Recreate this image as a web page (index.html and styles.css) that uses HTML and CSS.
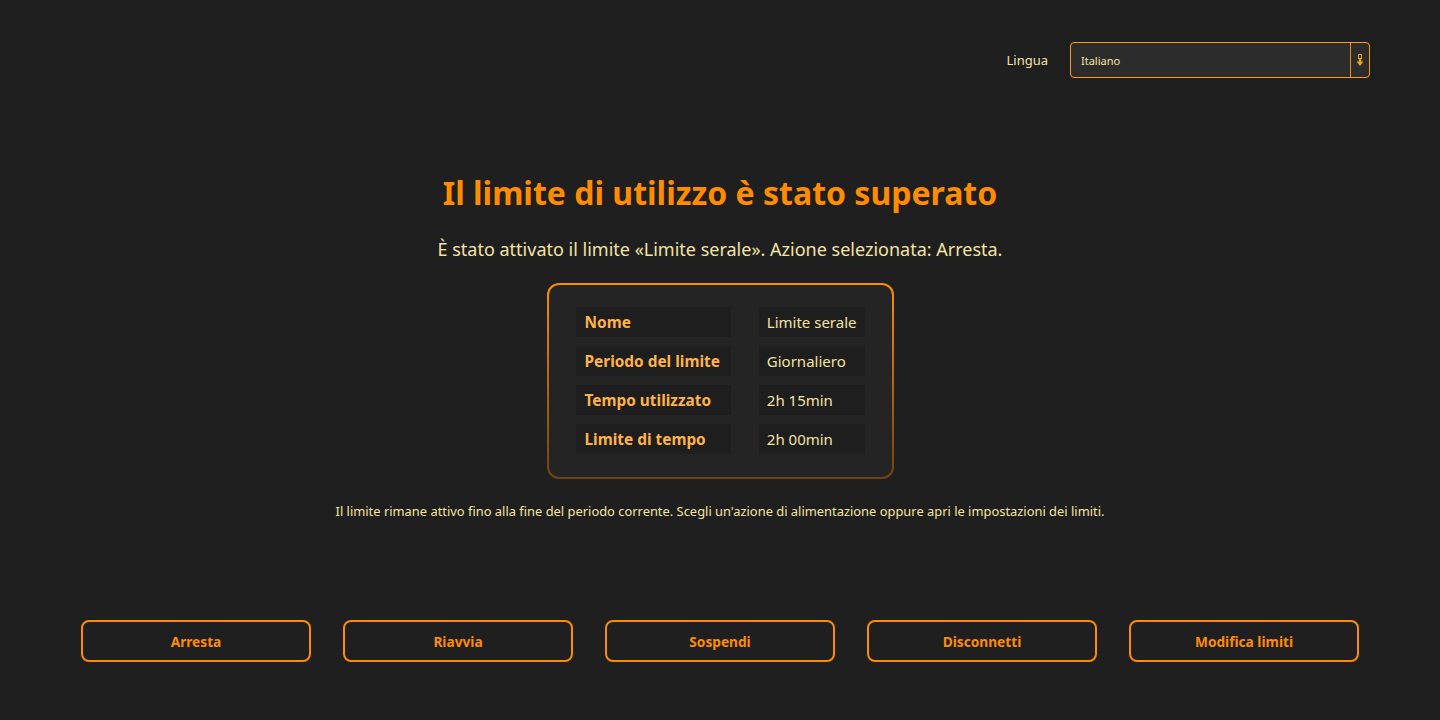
FILE: index.html
```html
<!DOCTYPE html>
<html lang="it">
<head>
  <meta charset="UTF-8">
  <meta name="viewport" content="width=device-width, initial-scale=1.0">
  <title>Limite di utilizzo superato</title>
  <link rel="stylesheet" href="styles.css">
</head>
<body>
  <div class="page">
    <div class="topbar">
      <label class="lang-label" for="lang">Lingua</label>
      <div class="select">
        <span class="select-value">Italiano</span>
        <span class="select-arrow">
          <svg width="8" height="13" viewBox="0 0 8 13">
            <rect x="2.5" y="0.5" width="3" height="4" fill="none" stroke="#e8a800" stroke-width="1"/>
            <rect x="3" y="4.5" width="2" height="4" fill="#e8a800"/>
            <path d="M0.5 7.5 L7.5 7.5 L4 12 Z" fill="#e8a800"/>
          </svg>
        </span>
      </div>
    </div>

    <div class="main">
      <h1>Il limite di utilizzo è stato superato</h1>
      <p class="subtitle">È stato attivato il limite «Limite serale». Azione selezionata: Arresta.</p>

      <div class="card">
        <table class="details">
          <tr><th>Nome</th><td>Limite serale</td></tr>
          <tr><th>Periodo del limite</th><td>Giornaliero</td></tr>
          <tr><th>Tempo utilizzato</th><td>2h 15min</td></tr>
          <tr><th>Limite di tempo</th><td>2h 00min</td></tr>
        </table>
      </div>

      <p class="note">Il limite rimane attivo fino alla fine del periodo corrente. Scegli un'azione di alimentazione oppure apri le impostazioni dei limiti.</p>
    </div>

    <div class="actions">
      <button class="action">Arresta</button>
      <button class="action">Riavvia</button>
      <button class="action">Sospendi</button>
      <button class="action">Disconnetti</button>
      <button class="action">Modifica limiti</button>
    </div>
  </div>
</body>
</html>
```

FILE: styles.css
```css
body {
  margin: 0;
  padding: 0;
  background-color: #1f1f1f;
  font-family: "Noto Sans", "Open Sans", sans-serif;
  color: #f3e4a2;
  height: 100vh;
  overflow: hidden;
}

.page {
  display: flex;
  flex-direction: column;
  height: 720px;
  box-sizing: border-box;
  padding: 42px 81px 0 81px;
}

.topbar {
  display: flex;
  justify-content: flex-end;
  align-items: center;
  gap: 22px;
  margin-right: -11px;
}

.lang-label {
  font-size: 13px;
}

.select {
  width: 300px;
  height: 36px;
  box-sizing: border-box;
  border: 1px solid #ff9a1a;
  border-radius: 4px;
  background: #2c2c2c;
  display: flex;
  align-items: center;
}

.select-value {
  flex: 1;
  padding-left: 10px;
  font-size: 11px;
}

.select-arrow {
  width: 18px;
  height: 100%;
  border-left: 1px solid #ff8c00;
  display: flex;
  align-items: center;
  justify-content: center;
}

.main {
  display: flex;
  flex-direction: column;
  align-items: center;
  margin-top: 95px;
}

h1 {
  margin: 0;
  color: #ff8c00;
  font-size: 32px;
  font-weight: bold;
  line-height: 40px;
}

.subtitle {
  margin: 24px 0 0 0;
  font-size: 18px;
  line-height: 24px;
}

.card {
  margin-top: 22px;
  width: 347px;
  box-sizing: border-box;
  padding: 22px 27px 23px 27px;
  border-radius: 12px;
  border: 2px solid transparent;
  background:
    linear-gradient(#242424, #242424) padding-box,
    linear-gradient(#ff8c00, #6e4210) border-box;
}

.details {
  border-collapse: separate;
  border-spacing: 0 9px;
  margin: -9px 0;
  width: 100%;
}

.details th,
.details td {
  background: #1e1e1e;
  height: 30px;
  padding: 0 8px;
  font-size: 15px;
  text-align: left;
  white-space: nowrap;
}

.details th {
  color: #ffb347;
  font-size: 15.4px;
  font-weight: bold;
  width: 140px;
  padding-left: 9px;
  border-right: 28px solid #242424;
}

.note {
  margin: 22px 0 0 0;
  font-size: 12.9px;
  line-height: 20px;
}

.actions {
  display: flex;
  gap: 32px;
  margin-top: auto;
  margin-bottom: 58px;
}

.action {
  flex: 1;
  height: 42px;
  background: transparent;
  border: 2px solid #ff8c00;
  border-radius: 8px;
  color: #ff8c00;
  font-family: inherit;
  font-size: 13.7px;
  font-weight: bold;
  cursor: pointer;
}

.action:hover {
  background: #2a2a2a;
}
```
